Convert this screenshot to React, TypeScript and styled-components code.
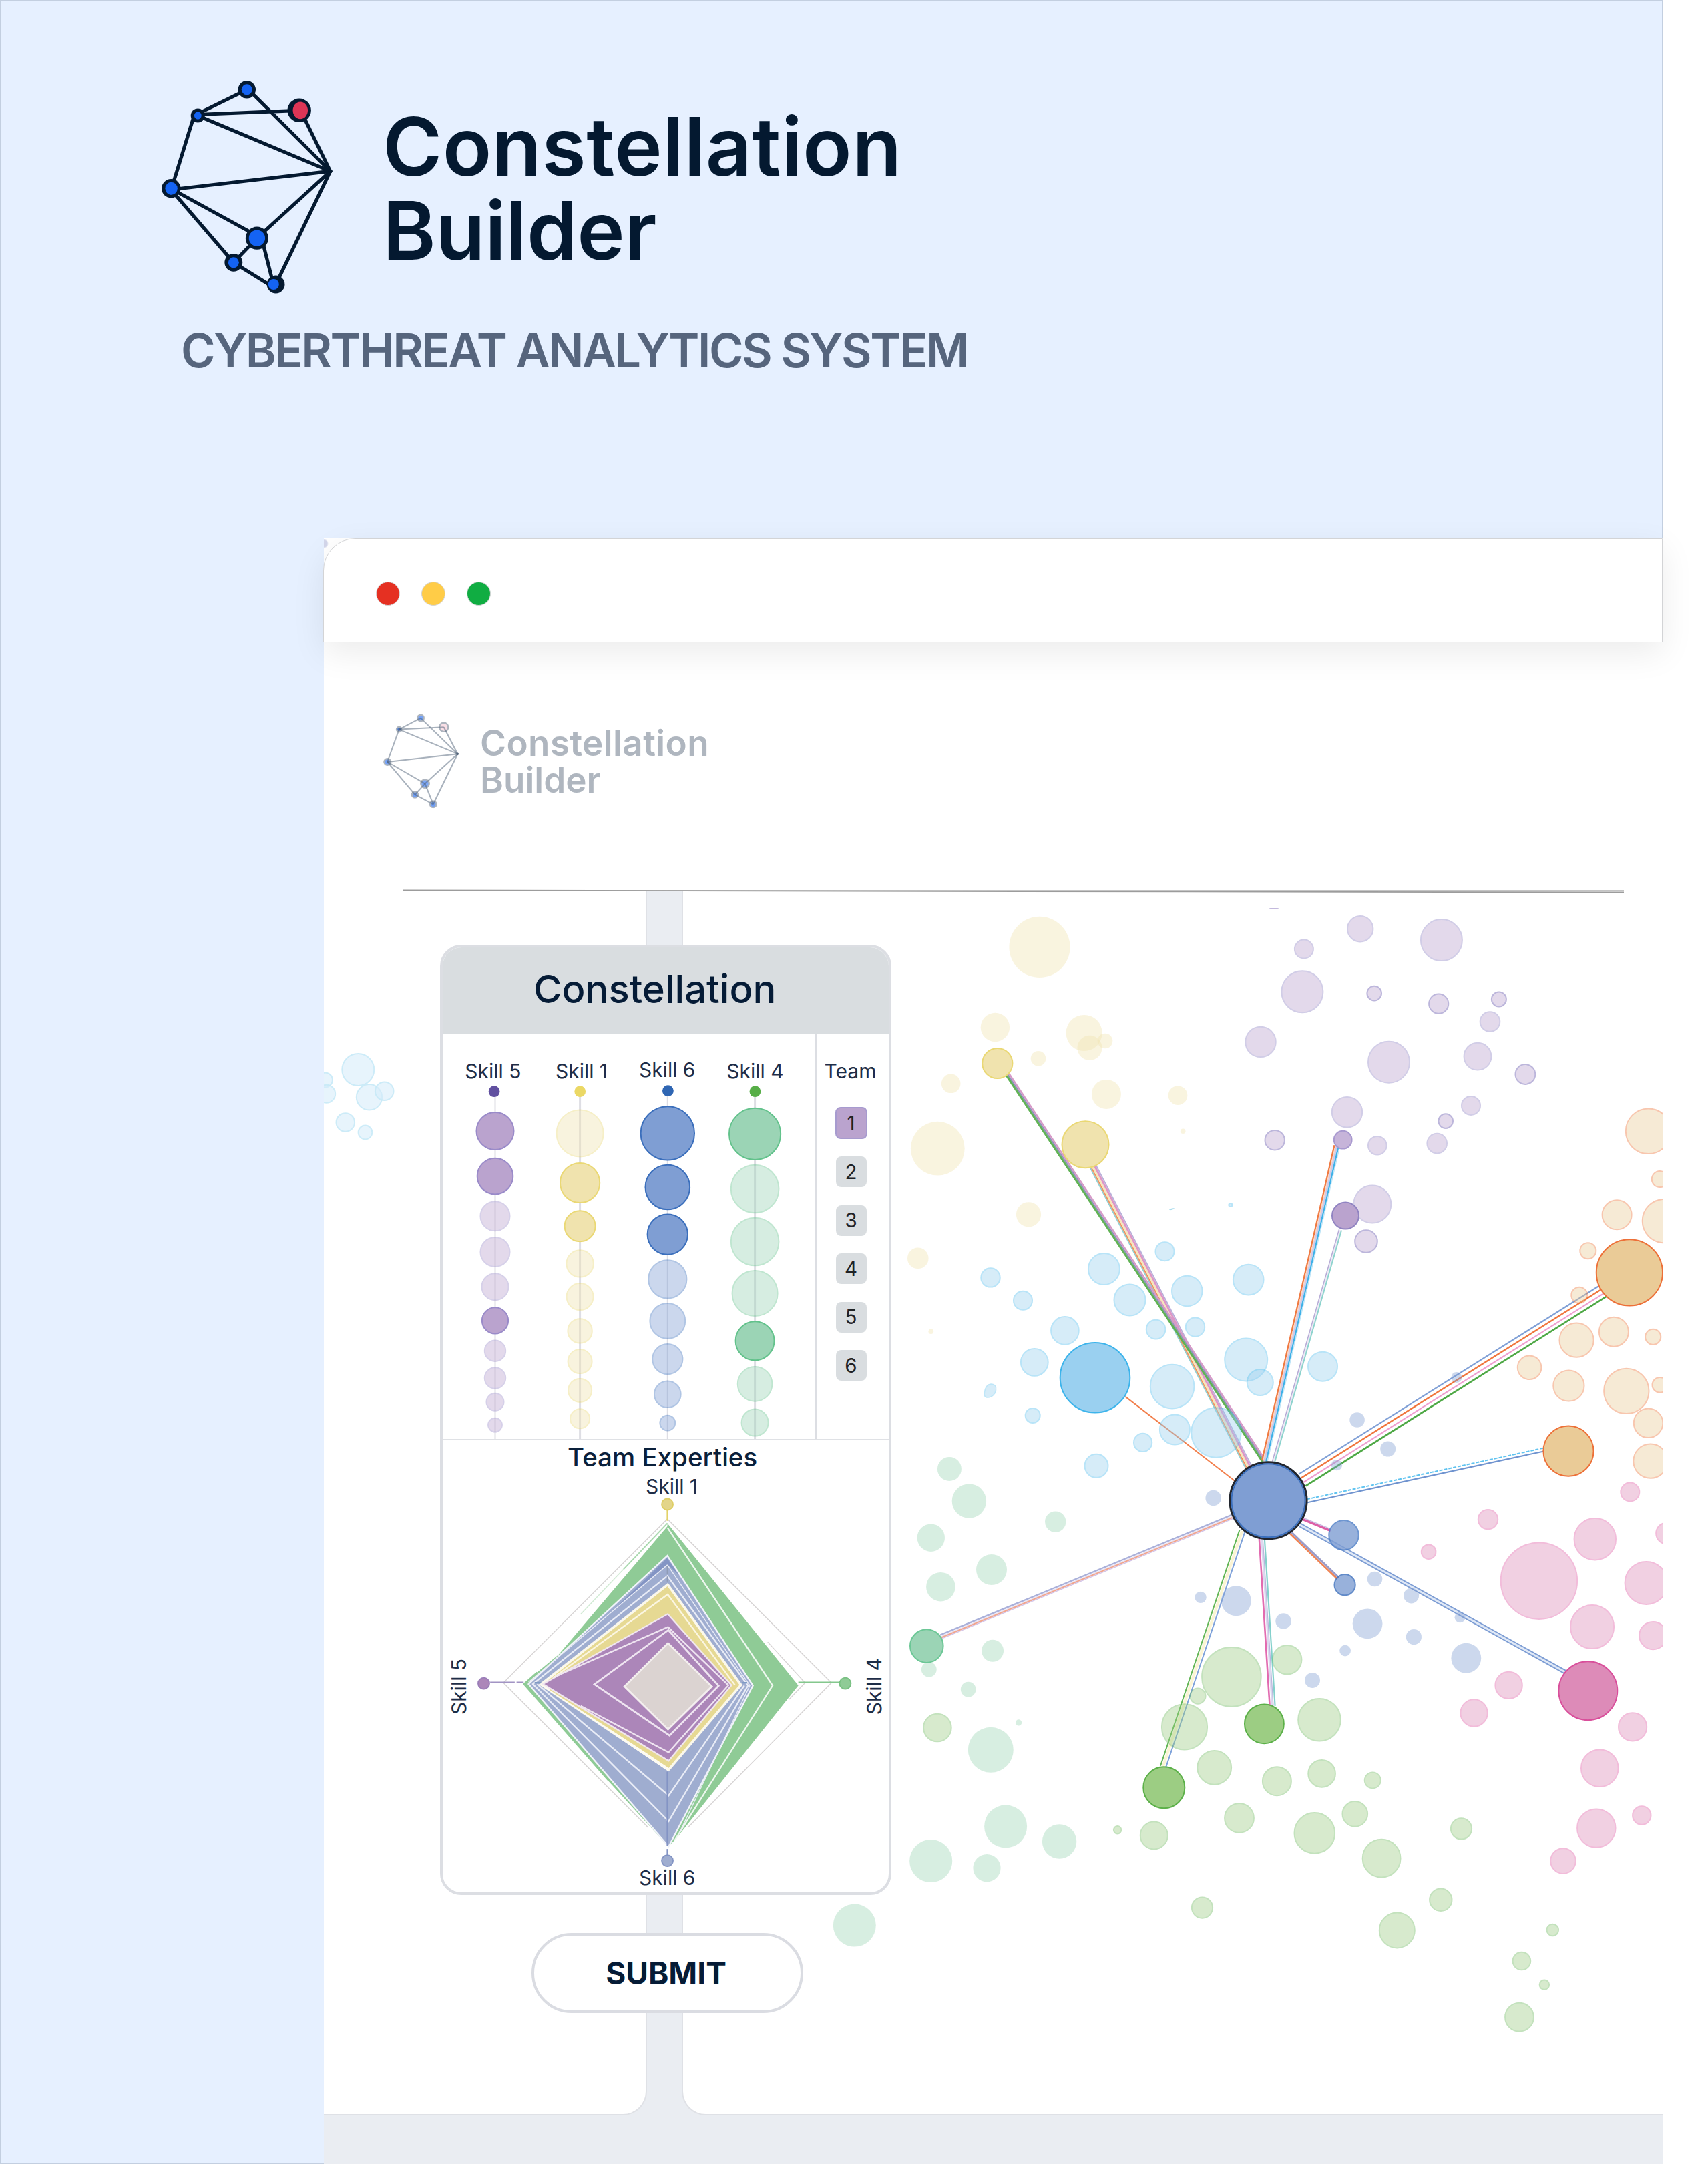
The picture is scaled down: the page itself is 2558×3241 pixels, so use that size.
import React from "react";
import styled, { createGlobalStyle } from "styled-components";

const GlobalStyle = createGlobalStyle`
  *, *::before, *::after { box-sizing: border-box; }
  html, body { margin: 0; padding: 0; background: #ffffff; }
  body { font-family: Inter, "Liberation Sans", sans-serif; }
`;

const ink = "#041930";

/* ---------- cover ---------- */

const Page = styled.div`
  width: 2558px;
  height: 3241px;
  background: #ffffff;
  overflow: hidden;
`;

const Cover = styled.main`
  display: flex;
  flex-direction: column;
  width: 2490px;
  height: 3241px;
  background: #e6f0ff;
  box-shadow: inset 0 0 0 1px #c3cfe0;
`;

const Brand = styled.header`
  display: flex;
  flex-direction: column;
  height: 806px;
  padding: 118px 0 0 240px;
`;

const BrandRow = styled.div`
  display: flex;
  align-items: flex-start;
  gap: 73px;
  height: 324px;
`;

const BrandName = styled.h1`
  margin: 38px 0 0;
  color: ${ink};
  font-size: 121px;
  line-height: 126px;
  font-weight: 600;
`;

const NameLine = styled.span<{ $tracking: number }>`
  display: block;
  letter-spacing: ${(p) => p.$tracking}px;
`;

const Tagline = styled.p`
  margin: 41px 0 0 31px;
  color: #56657d;
  font-size: 70px;
  line-height: 84px;
  font-weight: 600;
  letter-spacing: -2.42px;
  white-space: nowrap;
`;

/* ---------- window ---------- */

const Window = styled.section`
  display: flex;
  flex-direction: column;
  flex: 1;
  margin-left: 485px;
  background: radial-gradient(circle at 0 8px, #d3d6ea 5px, transparent 7px), #ffffff;
`;

const TitleBar = styled.div`
  position: relative;
  z-index: 1;
  flex: none;
  display: flex;
  align-items: center;
  gap: 32px;
  height: 156px;
  margin-left: -1px;
  padding: 10px 0 0 78px;
  background: #ffffff;
  border: 1px solid #d3d4d6;
  border-top-left-radius: 48px;
  box-shadow: 0 16px 50px rgba(0, 0, 0, 0.08);
`;

const TrafficLight = styled.span<{ $color: string }>`
  width: 36px;
  height: 36px;
  border: 1px solid #d3d4d6;
  border-radius: 50%;
  background: ${(p) => p.$color};
`;

const AppHeader = styled.div`
  flex: none;
  display: flex;
  align-items: flex-start;
  gap: 29px;
  height: 372px;
  padding: 106px 0 0 89px;
`;

const AppName = styled.h2`
  margin: 18px 0 0;
  color: #afb6bf;
  font-size: 53px;
  line-height: 55px;
  font-weight: 600;
`;

const Rule = styled.svg`
  display: block;
  position: relative;
  z-index: 1;
  flex: none;
  width: 1830px;
  height: 6px;
  margin: -2px 0 -4px 118px;
`;

const Workspace = styled.div`
  display: grid;
  flex: 1;
  grid-template-columns: 484px 52px 1469px;
  grid-template-rows: 1834px 1fr;
  background: #eaedf2;
`;

const Panel = styled.div<{ $side: "left" | "right" }>`
  grid-row: 1;
  grid-column: ${(p) => (p.$side === "left" ? 1 : 3)};
  background: #ffffff;
  border: 0 solid #dfe1e6;
  border-bottom-width: 2px;
  ${(p) =>
    p.$side === "left"
      ? "border-right-width: 2px; border-bottom-right-radius: 36px;"
      : "border-left-width: 2px; border-bottom-left-radius: 36px;"}
`;

const Plot = styled.svg`
  display: block;
  width: 100%;
  height: 1826px;
`;

const Overlay = styled.div`
  grid-row: 1;
  grid-column: 1 / -1;
  display: flex;
  flex-direction: column;
  align-items: center;
  gap: 57px;
  width: 676px;
  margin-left: 174px;
  padding-top: 81px;
`;

/* ---------- constellation card ---------- */

const Card = styled.article`
  flex: none;
  display: flex;
  flex-direction: column;
  width: 676px;
  height: 1423px;
  overflow: hidden;
  background: #ffffff;
  border: 4px solid #dcdee3;
  border-radius: 32px;
`;

const CardHeader = styled.div`
  flex: none;
  height: 129px;
  margin: 0 -4px;
  padding-left: 140px;
  background: #d9dde0;
`;

const CardTitle = styled.h2`
  margin: 0;
  padding-top: 27px;
  color: #051b36;
  font-size: 58px;
  line-height: 70px;
  font-weight: 500;
`;

const SkillSection = styled.div`
  flex: none;
  display: grid;
  grid-template-columns: 557px 1fr;
  height: 609px;
  border-bottom: 2px solid #dfe1e5;
`;

const SkillChart = styled.svg`
  display: block;
  width: 557px;
  height: 607px;
`;

const TeamColumn = styled.div`
  display: flex;
  flex-direction: column;
  align-items: center;
  padding: 36px 5px 0 0;
  border-left: 3px solid #dcdee3;
`;

const TeamLabel = styled.span`
  margin: 0 0 34px -2px;
  color: #1e2d47;
  font-size: 30px;
  line-height: 40px;
`;

const TeamButtons = styled.div`
  display: flex;
  flex-direction: column;
  align-items: center;
  gap: 25.6px;
`;

const TeamButton = styled.button<{ $active: boolean }>`
  width: ${(p) => (p.$active ? 48 : 46)}px;
  height: ${(p) => (p.$active ? 48 : 46)}px;
  margin: ${(p) => (p.$active ? "0" : "0.5px 0")};
  padding: 0 0 1px;
  border: ${(p) => (p.$active ? "2px solid #a79bcf" : "0")};
  border-radius: 8px;
  background: ${(p) => (p.$active ? "#baa3ce" : "#d9dde0")};
  color: #1f2226;
  font-family: inherit;
  font-size: 29.5px;
  line-height: 40px;
`;

const RadarTitle = styled.h3`
  margin: 3px 0 0 187px;
  color: #0a203b;
  font-size: 38.5px;
  line-height: 44px;
  font-weight: 500;
  white-space: nowrap;
`;

const RadarChart = styled.svg`
  display: block;
  width: 668px;
  height: 630px;
`;

const AxisLabel = styled.text`
  fill: #1e2d47;
  font-size: 30px;
  text-anchor: middle;
`;

const SubmitButton = styled.button`
  flex: none;
  width: 407px;
  height: 120px;
  margin-left: 4px;
  padding: 0 3px 0 0;
  background: #ffffff;
  border: 4px solid #dadce2;
  border-radius: 60px;
  color: #051b36;
  font-family: inherit;
  font-size: 46px;
  line-height: 60px;
  font-weight: 700;
`;

/* ---------- logos ---------- */

const logoLines = [
  [369.8, 134.3, 297, 170],
  [297, 171.5, 448, 165.3],
  [372, 134, 494.7, 256.3],
  [449, 163, 494.7, 256.3],
  [297, 173.5, 494.7, 256.3],
  [291, 172, 257, 282],
  [256, 284, 494.7, 256.3],
  [256, 282.5, 385, 353],
  [256, 284, 349.8, 393.3],
  [384.9, 356.7, 494.7, 256.3],
  [384.9, 356.7, 349.8, 393.3],
  [392, 357, 409.5, 426],
  [349.8, 393.3, 406, 428],
  [413.1, 426, 494.7, 256.3],
];

const logoNodes: { x: number; y: number; r: number; ix: number; rx: number; ry: number; red?: boolean }[] = [
  { x: 369.8, y: 134.3, r: 13.2, ix: 369.8, rx: 8, ry: 8 },
  { x: 296.3, y: 173, r: 10.6, ix: 296.3, rx: 5.4, ry: 5.8 },
  { x: 448.2, y: 165.3, r: 17.7, ix: 449.8, rx: 11.2, ry: 12.9, red: true },
  { x: 256.3, y: 282.3, r: 14.2, ix: 256.6, rx: 9.2, ry: 9.5 },
  { x: 384.9, y: 356.7, r: 17.1, ix: 384.9, rx: 12.2, ry: 12.2 },
  { x: 349.8, y: 393.3, r: 13.4, ix: 349.8, rx: 8, ry: 8 },
  { x: 413.1, y: 426, r: 13.4, ix: 409.8, rx: 8, ry: 8 },
];

const BrandLogo = () => (
  <svg width="260" height="324" viewBox="240 118 260 324" fill="none">
    <g stroke={ink} strokeWidth="5.2" strokeLinecap="round">
      {logoLines.map(([x1, y1, x2, y2], i) => (
        <line key={i} x1={x1} y1={y1} x2={x2} y2={y2} />
      ))}
    </g>
    {logoNodes.map((n, i) => (
      <g key={i}>
        <circle cx={n.x} cy={n.y} r={n.r} fill={ink} />
        <ellipse cx={n.ix} cy={n.y} rx={n.rx} ry={n.ry} fill={n.red ? "#dd3556" : "#1463f3"} />
      </g>
    ))}
  </svg>
);

const P = {
  top: [630, 1075.6],
  west: [597.6, 1092.6],
  red: [664.7, 1089.3],
  apex: [685.3, 1129.2],
  left: [580.2, 1141],
  mid: [636.5, 1173.6],
  low: [621.4, 1189.9],
  foot: [648.8, 1204.3],
};

const smallEdges: [keyof typeof P, keyof typeof P][] = [
  ["top", "west"], ["west", "red"], ["top", "apex"], ["red", "apex"], ["west", "apex"],
  ["west", "left"], ["left", "apex"], ["left", "mid"], ["left", "low"], ["mid", "apex"],
  ["mid", "low"], ["mid", "foot"], ["low", "foot"], ["foot", "apex"],
];

const smallNodes: [keyof typeof P, number, string][] = [
  ["top", 4.8, "#74a2f7"], ["west", 3.6, "#4a78cc"], ["red", 6.6, "#f9dfe6"], ["left", 4.8, "#74a2f7"],
  ["mid", 6.2, "#7da8f8"], ["low", 4.6, "#6e9cf3"], ["foot", 4.8, "#6e9cf3"],
];

const AppLogo = () => (
  <svg width="116" height="144" viewBox="574 1068 116 144" fill="none">
    {smallNodes.map(([k, r, c]) => (
      <circle key={k} cx={P[k][0]} cy={P[k][1]} r={r} fill={c} stroke="#adb4be" strokeWidth="2.4" />
    ))}
    <g stroke="#52637a" strokeOpacity="0.5" strokeWidth="2">
      {smallEdges.map(([a, b]) => (
        <line key={a + b} x1={P[a][0]} y1={P[a][1]} x2={P[b][0]} y2={P[b][1]} />
      ))}
    </g>
    <circle cx={P.apex[0]} cy={P.apex[1]} r="1.8" fill="#52637a" />
  </svg>
);

/* ---------- skill columns ---------- */

type Tone = { fill: string; stroke: string };

const skillTones: Record<string, Tone> = {
  purple: { fill: "#baa3ce", stroke: "#9a8bc9" },
  yellow: { fill: "#f0e3ae", stroke: "#ead874" },
  blue: { fill: "#7f9ed3", stroke: "#3b6fbc" },
  green: { fill: "#9bd4b5", stroke: "#62c28b" },
};

const skills = [
  {
    label: "Skill 5", tone: "purple", dot: "#6150a0", x: 741.5, dotX: 740.1, labelX: 738.3, labelY: 1614.8, lineW: 2,
    bubbles: [[1693.9, 28, 1], [1761.6, 26.8, 1], [1821.3, 22], [1875, 22], [1927.2, 20], [1977.9, 19.6, 1], [2023.2, 15.7], [2064, 15.7], [2099.8, 13], [2134.1, 10.4]],
  },
  {
    label: "Skill 1", tone: "yellow", dot: "#ebd865", x: 868.6, dotX: 868.7, labelX: 871, labelY: 1614.8, lineW: 3,
    bubbles: [[1697.4, 35], [1771.5, 29.6, 1], [1836.2, 23, 1], [1892.4, 20.2], [1942.1, 20], [1993.4, 18.2], [2039.1, 18], [2082.4, 17.5], [2124.7, 14.5]],
  },
  {
    label: "Skill 6", tone: "blue", dot: "#2f66b3", x: 999.8, dotX: 1000.4, labelX: 999.2, labelY: 1613.3, lineW: 2,
    bubbles: [[1697.4, 40.2, 1], [1778, 33.3, 1], [1848.6, 30.2, 1], [1915.8, 28.6], [1978.4, 26.4], [2035.6, 22.6], [2088.3, 19.8], [2131.1, 11.4]],
  },
  {
    label: "Skill 4", tone: "green", dot: "#57ae47", x: 1130.6, dotX: 1130.9, labelX: 1131, labelY: 1614.8, lineW: 3,
    bubbles: [[1698.4, 38.6, 1], [1780.5, 35.8], [1859.5, 35.8], [1937.1, 34], [2008.3, 29, 1], [2072.9, 25.8], [2130.6, 20]],
  },
];

const SkillColumns = () => (
  <SkillChart viewBox="663 1548 557 607">
    {skills.map((s) => {
      const tone = skillTones[s.tone];
      return (
        <g key={s.label}>
          <AxisLabel x={s.labelX} y={s.labelY}>{s.label}</AxisLabel>
          <line x1={s.x} y1="1635" x2={s.x} y2="2155" stroke="#dedee4" strokeWidth={s.lineW} />
          <circle cx={s.dotX} cy={s.label === "Skill 6" ? 1633.7 : 1634.7} r="8.4" fill={s.dot} />
          {s.bubbles.map(([y, r, on]) => (
            <circle key={y} cx={s.x} cy={y} r={r} fill={tone.fill} stroke={tone.stroke} strokeWidth="2" opacity={on ? 1 : 0.4} />
          ))}
        </g>
      );
    })}
  </SkillChart>
);

/* ---------- radar ---------- */

const Radar = () => (
  <RadarChart viewBox="663 2204 668 630">
    <AxisLabel x="1006" y="2236.8">Skill 1</AxisLabel>
    <AxisLabel x="999.2" y="2822.8">Skill 6</AxisLabel>
    <AxisLabel transform="translate(698 2526) rotate(-90)">Skill 5</AxisLabel>
    <AxisLabel transform="translate(1320 2525.7) rotate(-90)">Skill 4</AxisLabel>
    <g transform="translate(640 2140) scale(0.4592)" strokeLinejoin="miter">
      <path d="M720 1300L248 828L783 294L1318 828L850 1300M1110 695L1232 828L1180 882" fill="none" stroke="#d6d3d3" strokeWidth="3" />
      <path d="M783 308L1210 837L812 1336L786 1362L590 1148L315 832L358 794L428 736L783 318Z" fill="#8fcb96" />
      <path d="M783 308L640 458" stroke="#a9d9ae" strokeWidth="4" />
      <path d="M640 458L500 605" stroke="#d0ead3" strokeWidth="3" />
      <path d="M358 794L315 832L590 1146" fill="none" stroke="#8fcb96" strokeWidth="5" />
      <path d="M783 322L1126 837L808 1340" fill="none" stroke="#eef7ef" strokeWidth="5" />
      <path d="M783 414L1062 837L787 1362L330 832Z" fill="#9fadd0" stroke="#f1f3fa" strokeWidth="5" />
      <path d="M782 422L820 476L783 442L575 622Z" fill="#8394c4" />
      <path d="M783 444L1052 837L822 1318" fill="none" stroke="#e9ecf6" strokeWidth="3" />
      <path d="M783 444L330 826" fill="none" stroke="#e9ecf6" strokeWidth="3" />
      <path d="M783 480L1046 837L787 1280L344 832Z" fill="none" stroke="#e9ecf6" strokeWidth="5" />
      <path d="M358 832L787 1196L1034 837" fill="none" stroke="#e9ecf6" strokeWidth="5" />
      <path d="M783 1118V1360" stroke="#8394c4" strokeWidth="5" />
      <path d="M783 448V498" stroke="#8f9bb5" strokeWidth="4" strokeDasharray="26 8" />
      <path d="M784 508L1023 835L787 1112L370 833Z" fill="#e6d993" stroke="#fbf8ec" strokeWidth="8" />
      <path d="M380 836L787 1112" stroke="#fdfbf3" strokeWidth="10" />
      <path d="M400 848L787 1100" stroke="#e6d993" strokeWidth="7" />
      <path d="M410 812L784 540L1003 835" fill="none" stroke="#fbf6e2" strokeWidth="5" />
      <path d="M784 604L992 836L787 1083L377 832Z" fill="#ac86b9" stroke="#f0e6f0" strokeWidth="5" />
      <path d="M420 806L785 646L982 836L787 1055L500 903" fill="none" stroke="#efe5f1" strokeWidth="5" />
      <path d="M786 656L950 838L790 1000L545 833Z" fill="none" stroke="#efe5f1" strokeWidth="6" />
      <path d="M785 699L928 840L785 980L643 840Z" fill="#dbd3d1" stroke="#f3eeee" strokeWidth="6" />
      <path d="M783 262V300" stroke="#e3d268" strokeWidth="5" />
      <path d="M783 1370V1392" stroke="#8394c4" strokeWidth="5" />
      <path d="M205 827H285M291 827H314" stroke="#a294c4" strokeWidth="5" />
      <path d="M350 828H370M1028 828H1043" stroke="#7f9bc4" strokeWidth="5" />
      <path d="M1210 827H1346" stroke="#84c88d" strokeWidth="5" />
      <circle cx="783" cy="246" r="18.5" fill="#e3d58a" stroke="#dfce64" strokeWidth="4" />
      <circle cx="184" cy="830" r="18.5" fill="#ac86b9" stroke="#9a7db8" strokeWidth="4" />
      <circle cx="1363" cy="830" r="18.5" fill="#8fcb96" stroke="#78c082" strokeWidth="4" />
      <circle cx="783" cy="1408" r="18.5" fill="#9fadd0" stroke="#8394c4" strokeWidth="4" />
    </g>
  </RadarChart>
);

/* ---------- network ---------- */

type Dot = [number, number, number];

const clusters: { id: string; fill: string; stroke: string; dots: Dot[] }[] = [
  {
    id: "sand", fill: "#f0e3ae", stroke: "none",
    dots: [
      [1557, 1418.4, 45.6], [1490.4, 1538.5, 21.7], [1623.6, 1547, 27.1], [1632, 1569.3, 18.5], [1655, 1559, 11.3],
      [1555, 1585.3, 11.3], [1424.2, 1622.8, 14.3], [1656.9, 1638.9, 22], [1764, 1640.7, 14.3], [1404.3, 1720.2, 40.4],
      [1771.7, 1694.3, 3.8], [1540.5, 1818.8, 18.6], [1374.8, 1884.4, 15.8], [1394.3, 1994.2, 3.8],
    ],
  },
  {
    id: "sky", fill: "#9ad0f0", stroke: "#4fbdee",
    dots: [
      [1744.5, 1874.2, 14], [1653.4, 1900.5, 23.5], [1692, 1946.9, 23.5], [1777.8, 1933.5, 22.8], [1869.7, 1916.6, 22.8],
      [1483.5, 1913.4, 14.2], [1532, 1947.8, 14], [1594.9, 1992.9, 20.8], [1731.1, 1991.1, 14.3], [1790, 1987.6, 14.2],
      [1549.3, 2040.3, 20.4], [1546.7, 2119.9, 11], [1755.6, 2076.6, 32.8], [1866.2, 2036.5, 32], [1887.3, 2070.5, 19.5],
      [1821.4, 2145.5, 37.2], [1759.4, 2140.9, 22.5], [1711.6, 2160.4, 13.6], [1642, 2195.3, 17.5], [1981, 2046.7, 22],
      [1842.9, 1804.5, 2.5],
    ],
  },
  {
    id: "mint", fill: "#9bd4b5", stroke: "none",
    dots: [
      [1421.9, 2199.9, 18], [1451.4, 2248.1, 25.7], [1394.3, 2303.2, 20.7], [1580.7, 2279.1, 15.7], [1485, 2351, 23],
      [1408.9, 2376.7, 21.8], [1486.6, 2472.3, 16.5], [1391.3, 2500.3, 11.4], [1450.2, 2530.1, 11.4], [1525.6, 2579.9, 4.6],
      [1483.8, 2620.8, 34], [1506.1, 2735.5, 32], [1394.2, 2787.1, 32], [1586.6, 2758, 25.7], [1478, 2797.6, 20.6], [1279.8, 2883.6, 32],
    ],
  },
  {
    id: "leaf", fill: "#9ccd83", stroke: "#6cb85c",
    dots: [
      [1403.9, 2587.5, 20.8], [1844.4, 2511.4, 44.3], [1793.9, 2540.1, 11.6], [1774, 2586.4, 34.1], [1927.7, 2485.6, 21.7],
      [1976, 2575.7, 31.8], [1818.7, 2647.3, 25.4], [1912.4, 2667.7, 21.5], [1979.6, 2656.4, 20.3], [2055.8, 2666.4, 12],
      [2029.3, 2716.8, 18.8], [1968.8, 2745.4, 30.3], [1856, 2722.9, 21.9], [1728.3, 2748.9, 20.5], [1673.6, 2740.7, 5.7],
      [2188.5, 2738.9, 15.6], [2069.1, 2783.2, 28.4], [1800.5, 2857.1, 15.6], [2157.8, 2845.3, 16.7], [2092.3, 2890.9, 26.5],
      [2325.3, 2890.5, 8.8], [2278.9, 2937, 13.3], [2312.9, 2972.6, 7.2], [2275.5, 3021.2, 21.4],
    ],
  },
  {
    id: "rose", fill: "#dd8bb8", stroke: "#e05aa5",
    dots: [
      [2441.3, 2234.5, 14], [2228.5, 2275.6, 14.7], [2139.6, 2324.2, 10.8], [2304.9, 2367.7, 57.2], [2388.8, 2305.2, 31.2],
      [2465.6, 2370.9, 32], [2384.6, 2436.5, 32.5], [2475.7, 2449.6, 20.6], [2496, 2296.5, 15.8], [2259.6, 2523.9, 20.2],
      [2207.6, 2565.4, 20.2], [2445.1, 2586.4, 21.1], [2395.8, 2648.2, 27.8], [2390.8, 2738.1, 28.7], [2458.8, 2719, 13.7], [2341, 2787.1, 18.8],
    ],
  },
  {
    id: "amber", fill: "#eacb97", stroke: "#ee7338",
    dots: [
      [2468.6, 1694.3, 33.8], [2485.8, 1766.1, 12], [2421.6, 1819.3, 22], [2492.5, 1828.6, 32.8], [2378.3, 1873.3, 12],
      [2365.3, 1939.8, 12], [2416.9, 1994.7, 22], [2475.7, 2002.3, 11.6], [2361.1, 2007.2, 25.6], [2290.6, 2048.2, 17.8],
      [2349.4, 2075.5, 23.1], [2435.8, 2083.4, 33.7], [2485.8, 2074.3, 11.3], [2468.6, 2131.3, 21.8], [2471.9, 2188.2, 25.6],
    ],
  },
  {
    id: "lilac", fill: "#baa3ce", stroke: "#8f83c4",
    dots: [
      [2037.2, 1391.2, 19.2], [2158.9, 1408.1, 31], [1952.9, 1421.5, 14], [1950.4, 1485.3, 31], [2231.5, 1530, 14.8],
      [1888, 1560.4, 22.7], [2080, 1590.7, 31], [2213, 1582.2, 20.4], [2017.5, 1665.7, 22.7], [2203, 1655.9, 14],
      [2152.2, 1712.6, 14.8], [2062.8, 1715.7, 13.8], [2055.3, 1803.6, 28],
    ],
  },
  {
    id: "lilac-ring", fill: "#baa3ce", stroke: "#5a4aa8",
    dots: [
      [2058.2, 1487.6, 10.8], [2154.7, 1503.2, 14.6], [2244.9, 1496.5, 11], [2284.4, 1609, 14.9], [2165.2, 1679.1, 10.8],
      [1909.2, 1707.7, 14.7], [2046, 1859, 16.8],
    ],
  },
  {
    id: "steel", fill: "#7f9ed3", stroke: "none",
    dots: [
      [1817.2, 2243.5, 11.8], [1798.1, 2392.4, 8.6], [1851.3, 2397.7, 22.5], [1922.1, 2428, 11.8], [2032.6, 2126.5, 11.3],
      [2078.7, 2170, 11.5], [2181.6, 2062.9, 8], [2002, 2194.1, 8.2], [2059, 2365, 11.3], [2113.6, 2389.9, 11.5],
      [2048.1, 2431.8, 22.4], [2014.6, 2472.1, 8.4], [2117.4, 2451.5, 11.6], [1965.5, 2516.4, 11.5], [2186.6, 2422.3, 8], [2195.8, 2483.2, 22.4],
    ],
  },
];

const members: { at: Dot; fill: string; stroke: string; opacity?: number }[] = [
  { at: [1493.8, 1592.5, 22.6], fill: "#f0e3ae", stroke: "#ead874" },
  { at: [1625.5, 1714.3, 35], fill: "#f0e3ae", stroke: "#ead874" },
  { at: [1640, 2063.2, 52.3], fill: "#9ad0f0", stroke: "#3db4eb" },
  { at: [1387.8, 2465.1, 24.8], fill: "#9bd4b5", stroke: "#6cc796" },
  { at: [1893.4, 2581.8, 29.4], fill: "#9ccd83", stroke: "#5bb048" },
  { at: [1743.3, 2677.3, 31], fill: "#9ccd83", stroke: "#5bb048" },
  { at: [2378.3, 2532.2, 44], fill: "#dd8bb8", stroke: "#d94f9b" },
  { at: [2440.4, 1905.9, 49.6], fill: "#eacb97", stroke: "#ed7038" },
  { at: [2349, 2173.2, 37.6], fill: "#eacb97", stroke: "#ed7038" },
  { at: [2011.2, 1707.2, 13.4], fill: "#c6b4d9", stroke: "#a899cf" },
  { at: [2015, 1820.6, 20], fill: "#baa3ce", stroke: "#9184c2" },
  { at: [2012.5, 2299.3, 22.2], fill: "#7f9ed3", stroke: "#4a7cc6", opacity: 0.8 },
  { at: [2014.1, 2373.7, 15.6], fill: "#7f9ed3", stroke: "#3b6fbc", opacity: 0.8 },
];

type Strand = { off: number; w: number; color: string; dash?: string };

const bundles: { from: [number, number]; to: [number, number]; strands: Strand[] }[] = [
  {
    from: [1637, 1747], to: [1871, 2199],
    strands: [
      { off: 4.8, w: 1.8, color: "#8fd0d3" }, { off: 3, w: 2, color: "#f0925f" }, { off: 0.6, w: 3, color: "#f6e6bb" },
      { off: -2.4, w: 3, color: "#de96c6" }, { off: -4.8, w: 1.8, color: "#b9afd9" },
    ],
  },
  {
    from: [1509, 1609], to: [1893, 2188],
    strands: [
      { off: 0, w: 2.4, color: "#8e97bb" }, { off: 2.4, w: 3, color: "#60b254" }, { off: -2.4, w: 2.6, color: "#d69ac8" },
    ],
  },
  {
    from: [2002, 1716], to: [1893.6, 2188],
    strands: [
      { off: 3.6, w: 2.4, color: "#f07a42" }, { off: 1.7, w: 1.4, color: "#fbd3bd" }, { off: -0.2, w: 2.6, color: "#cfc8e6" },
      { off: -2.8, w: 2.4, color: "#3eb1e8" }, { off: -4.6, w: 1.4, color: "#bde4f7" },
    ],
  },
  {
    from: [2007.2, 1842], to: [1907.3, 2189],
    strands: [
      { off: 1.7, w: 1.8, color: "#b7acd6" }, { off: 0, w: 2, color: "#ece9f5" }, { off: -1.9, w: 2, color: "#8dd3cd" },
    ],
  },
  { from: [1685.2, 2091.6], to: [1849.8, 2218.2], strands: [{ off: 0, w: 2, color: "#f27f4c" }] },
  { from: [2393.4, 1926.8], to: [1945.3, 2207.6], strands: [{ off: 0, w: 2.2, color: "#7f9fd6" }] },
  { from: [2396.4, 1932.2], to: [1948.7, 2213.5], strands: [{ off: 0, w: 2.4, color: "#f0753d" }] },
  { from: [2401.8, 1937.1], to: [1952.5, 2219.8], strands: [{ off: 0, w: 2.2, color: "#ef9fd0" }] },
  { from: [2406, 1941.6], to: [1955.4, 2225.4], strands: [{ off: 0, w: 2.6, color: "#4ea845" }] },
  { from: [2311, 2168.8], to: [1957, 2245.4], strands: [{ off: 0, w: 2, color: "#5fc3f0", dash: "5 2" }] },
  { from: [2312, 2173.4], to: [1958, 2250.2], strands: [{ off: 0, w: 2, color: "#6f93cf" }] },
  {
    from: [1949, 2274], to: [1993, 2292],
    strands: [{ off: 0.6, w: 3.4, color: "#dc5fa7" }, { off: -1.8, w: 1.4, color: "#c7b8e0" }],
  },
  {
    from: [1933, 2296], to: [2004, 2364],
    strands: [{ off: 1.4, w: 2.6, color: "#f08454" }, { off: -1.6, w: 3, color: "#9a9cc9" }],
  },
  {
    from: [1947, 2284], to: [2344, 2504],
    strands: [
      { off: 0, w: 4.4, color: "#dfe8f6" }, { off: 2.4, w: 1.8, color: "#7d9dd4" }, { off: -2.4, w: 1.8, color: "#7d9dd4" },
    ],
  },
  {
    from: [1409, 2451], to: [1845, 2271.5],
    strands: [
      { off: -2.5, w: 2.4, color: "#a9b0da" }, { off: 0, w: 1.6, color: "#e7dff0" }, { off: 1.6, w: 2, color: "#f2a58c" },
      { off: 3.4, w: 1.4, color: "#d3c3e6" },
    ],
  },
  {
    from: [1860.4, 2293], to: [1742, 2646],
    strands: [
      { off: 0.2, w: 4.2, color: "#fbf4d3" }, { off: 4.2, w: 2, color: "#63b657" }, { off: -4.2, w: 2, color: "#7fa2da" },
    ],
  },
  {
    from: [1889.8, 2303], to: [1905.6, 2555],
    strands: [
      { off: 4, w: 2.6, color: "#e26bb0" }, { off: 0.2, w: 3, color: "#dcd9ef" }, { off: -1.4, w: 1.2, color: "#b9b5dc" },
      { off: -4, w: 2.2, color: "#84d0cc" },
    ],
  },
];

const Bundle = ({ from, to, strands }: (typeof bundles)[number]) => {
  const dx = to[0] - from[0];
  const dy = to[1] - from[1];
  const len = Math.hypot(dx, dy);
  const nx = -dy / len;
  const ny = dx / len;
  return (
    <g>
      {strands.map((s, i) => (
        <line
          key={i}
          x1={from[0] + nx * s.off}
          y1={from[1] + ny * s.off}
          x2={to[0] + nx * s.off}
          y2={to[1] + ny * s.off}
          stroke={s.color}
          strokeWidth={s.w}
          strokeDasharray={s.dash}
        />
      ))}
    </g>
  );
};

const Network = () => (
  <Plot viewBox="1023 1334 1467 1826">
    {bundles.map((b, i) => (
      <Bundle key={i} {...b} />
    ))}
    {clusters.map((c) => (
      <g key={c.id} fill={c.fill} stroke={c.stroke} strokeWidth="2">
        {c.dots.map(([x, y, r], i) => (
          <circle key={i} cx={x} cy={y} r={r} opacity="0.4" />
        ))}
      </g>
    ))}
    <path d="M1484 2073c6 0 8.500 4 7.500 9c-1 6-6 11-12 11c-5 0-6-3-5-8c1-6 4-11.500 9.500-12z" fill="#9ad0f0" stroke="#5fc3ef" strokeWidth="1.600" opacity="0.4" />
    <path d="M1751 1812c1-2 5-3 8-2.500c-2 2-5 3-8 2.500z" fill="#a9dcec" />
    <path d="M1900 1360h16c-4 2.400-12 2.400-16 0z" fill="#c3b9dd" />
    {members.map((m) => (
      <circle key={m.at.join()} cx={m.at[0]} cy={m.at[1]} r={m.at[2]} fill={m.fill} stroke={m.stroke} strokeWidth="2" opacity={m.opacity} />
    ))}
    <circle cx="1899.5" cy="2247.3" r="57.600" fill="#7f9ed3" stroke="#22262e" strokeWidth="3" />
    <circle cx="1899.5" cy="2247.3" r="55" fill="none" stroke="#3b6fbc" strokeWidth="2" />
  </Plot>
);

const edgeDots: Dot[] = [
  [487, 1617.5, 11], [488.7, 1638.3, 13.5], [536.3, 1602, 24], [553, 1643.3, 19.2], [575.7, 1634.3, 13.8],
  [517.3, 1681, 13.8], [547, 1696, 10.4],
];

const EdgeCluster = () => (
  <Plot viewBox="485 1334 482 1826">
    {edgeDots.map(([x, y, r], i) => (
      <circle key={i} cx={x} cy={y} r={r} fill="#d7ecfa" fillOpacity="0.6" stroke="#c6e9f7" strokeWidth="2" strokeOpacity="0.85" />
    ))}
  </Plot>
);

const teams = [1, 2, 3, 4, 5, 6];

export default function App() {
  return (
    <Page>
      <GlobalStyle />
      <Cover>
        <Brand>
          <BrandRow>
            <BrandLogo />
            <BrandName>
              <NameLine $tracking={0.5}>Constellation</NameLine>
              <NameLine $tracking={-0.3}>Builder</NameLine>
            </BrandName>
          </BrandRow>
          <Tagline>CYBERTHREAT ANALYTICS SYSTEM</Tagline>
        </Brand>
        <Window>
          <TitleBar>
            <TrafficLight $color="#e53022" />
            <TrafficLight $color="#ffcc47" />
            <TrafficLight $color="#10ad42" />
          </TitleBar>
          <AppHeader>
            <AppLogo />
            <AppName>
              <NameLine $tracking={0.4}>Constellation</NameLine>
              <NameLine $tracking={0}>Builder</NameLine>
            </AppName>
          </AppHeader>
          <Rule viewBox="0 0 1830 6">
            <line x1="0" y1="1.5" x2="1829" y2="1.5" stroke="#c4c4c4" strokeWidth="1" />
            <line x1="0" y1="1.500" x2="1829" y2="4.5" stroke="#9c9c9c" strokeWidth="1.8" />
          </Rule>
          <Workspace>
            <Panel $side="left">
              <EdgeCluster />
            </Panel>
            <Panel $side="right">
              <Network />
            </Panel>
            <Overlay>
              <Card>
                <CardHeader>
                  <CardTitle>Constellation</CardTitle>
                </CardHeader>
                <SkillSection>
                  <SkillColumns />
                  <TeamColumn>
                    <TeamLabel>Team</TeamLabel>
                    <TeamButtons>
                      {teams.map((t) => (
                        <TeamButton key={t} $active={t === 1}>
                          {t}
                        </TeamButton>
                      ))}
                    </TeamButtons>
                  </TeamColumn>
                </SkillSection>
                <RadarTitle>Team Experties</RadarTitle>
                <Radar />
              </Card>
              <SubmitButton>SUBMIT</SubmitButton>
            </Overlay>
          </Workspace>
        </Window>
      </Cover>
    </Page>
  );
}
